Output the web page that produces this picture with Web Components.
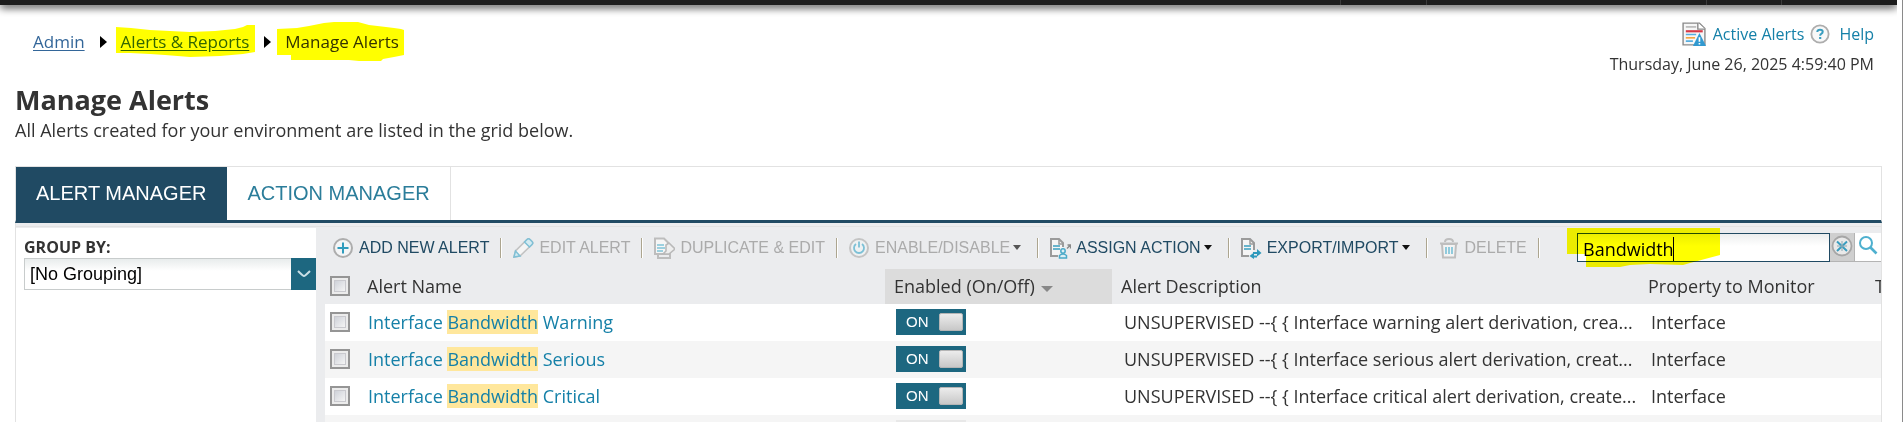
<!DOCTYPE html>
<html lang="en">
<head>
<meta charset="utf-8">
<title>Manage Alerts</title>
<style>
    :root {
        --navy: #204a63;
        --teal: #1d6780;
        --link: #1580a8;
        --text: #333;
        --panel-grey: #ebecee;
        --line: #e2e2e2;
        --ui-font: "Open Sans", "Noto Sans", sans-serif;
        --button-font: "Liberation Sans", Arial, sans-serif;
    }

    body {
        margin: 0;
        height: 100vh;
        overflow: hidden;
        background: #fff;
        color: var(--text);
        font: 18px/24px var(--ui-font);
    }
</style>
</head>
<body>
<alerts-page></alerts-page>

<script>
const define = (tagName, html, setup) => {
    const template = document.createElement('template');
    template.innerHTML = html;

    customElements.define(tagName, class extends HTMLElement {
        connectedCallback() {
            if (!this.shadowRoot) {
                const content = template.content.cloneNode(true);
                if (setup) {
                    setup(this, content);
                }
                this.attachShadow({mode: 'open'});
                this.shadowRoot.appendChild(content);
            }
        }
    });
};

const icons = {
    add: `<circle cx="11" cy="11" r="9" fill="#f4f5f6" stroke="#adadad" stroke-width="2"/>
        <path d="M11 5.500v11M5.500 11h11" stroke="#2f9cbd" stroke-width="2"/>`,
    edit: `<path d="M2 20l1.500-6L15 2.500q1.500-1.500 3 0l2 2q1.500 1.500 0 3L8 19z" fill="#f5f5f5" stroke="#c2c2c2" stroke-width="1.600"/>
        <path d="M15 2.500q1.500-1.500 3 0l2 2q1.500 1.500 0 3L17.500 10l-5-5zM2 20l1.500-6 4.500 5z" fill="#d4ebf2" stroke="#7fc0d6" stroke-width="1.500"/>`,
    duplicate: `<path d="M5 17v4h12v-5" fill="none" stroke="#bdbdbd" stroke-width="2"/>
        <path d="M2 1.500h9l4 4V17H2z" fill="#f6f6f6" stroke="#bdbdbd" stroke-width="2"/>
        <path d="M4 8h7M4 11h8M4 14h6" stroke="#7fc3d8" stroke-width="1.600"/>
        <path d="M10 17l3-3V8l3-2 6 6-6 5z" fill="#eee" stroke="#b9b9b9" stroke-width="1.600"/>`,
    power: `<circle cx="11" cy="11" r="9" fill="#eef1f2" stroke="#c4c4c4" stroke-width="2"/>
        <path d="M8 7a5 5 0 1 0 6 0M11 4.500v6" fill="none" stroke="#7cc0d6" stroke-width="1.800"/>`,
    assign: `<path d="M9 19H2V2h8l4 4v4" fill="#f5f5f5" stroke="#9b9b9b" stroke-width="2"/>
        <path d="M10 2v5h4" fill="none" stroke="#9b9b9b" stroke-width="1.500"/>
        <path d="M4 9h7M4 12h7" stroke="#3a9fbe" stroke-width="1.700"/>
        <circle cx="14" cy="14" r="2.200" fill="#dceff5" stroke="#4aa9c8" stroke-width="1.500"/>
        <path d="M10.500 21v-2.500q3.500-3 7 0V21z" fill="#dceff5" stroke="#4aa9c8" stroke-width="1.500"/>
        <path d="M18 11.500l3-3M18.500 8h3v3.500" fill="none" stroke="#888" stroke-width="1.400"/>`,
    transfer: `<path d="M9 19H2V2h8l4 4v7" fill="#f5f5f5" stroke="#9b9b9b" stroke-width="2"/>
        <path d="M10 2v5h4" fill="none" stroke="#9b9b9b" stroke-width="1.500"/>
        <path d="M4 9h7M4 12h7" stroke="#3a9fbe" stroke-width="1.700"/>
        <path d="M13 15h4v-3l4.500 4-4.500 3.500V17h-4z" fill="#2e99bc"/>
        <path d="M17 20.500h-3V22l-4.500-3 4.500-3.500v3h3z" fill="#2e99bc"/>`,
    trash: `<path d="M4 7h14l-1 13.500H5z" fill="#f3f3f3" stroke="#bebebe" stroke-width="2"/>
        <path d="M2 6.500h18M7 5q0-3 4-3t4 3" fill="none" stroke="#bebebe" stroke-width="2"/>
        <path d="M8 10v7M11 10v7M14 10v7" stroke="#7fc3d8" stroke-width="1.700"/>`,
    alerts: `<path d="M1 1h15l5 5v15H1z" fill="#f7f7f7" stroke="#8b8b8b" stroke-width="1.300"/>
        <path d="M14.500 1v5.500H21" fill="#fff" stroke="#8b8b8b" stroke-width="1.300"/>
        <path d="M3.500 4.500H13" stroke="#b8b8b8" stroke-width="1.500"/>
        <path d="M3.500 8.500H19" stroke="#d63845" stroke-width="2"/>
        <path d="M3.500 11.500H13M3.500 17.500H10" stroke="#57aee0" stroke-width="1.500"/>
        <path d="M3.500 14.500H12" stroke="#f4a640" stroke-width="1.500"/>
        <path d="M16 10l6 12H10z" fill="#3199d0"/>
        <path d="M16 14v4M16 19.300v1.400" stroke="#fff" stroke-width="1.500"/>`,
    help: `<circle cx="11" cy="11" r="9.500" fill="#f8f8f8" stroke="#adadad" stroke-width="2"/>
        <path d="M8 8.800q.2-2.600 3-2.600 3 0 3 2.400 0 1.400-1.600 2.200-1.200.6-1.200 2" fill="none" stroke="#3a9dbf" stroke-width="2.200"/>
        <path d="M11.200 14.300v2.200" stroke="#3a9dbf" stroke-width="2.400"/>`,
    clear: `<circle cx="11" cy="11" r="9.500" fill="#e9e9e9" stroke="#a6a6a6" stroke-width="1.800"/>
        <path d="M6 6.500l10 9.500M16 6.500L6 16" stroke="#3a9dbf" stroke-width="2"/>
        <path d="M11 6v10M6 11h10" stroke="#8fa9b2" stroke-width="1"/>`,
    search: `<circle cx="9" cy="8" r="6" fill="#fff" stroke="#4eb0cf" stroke-width="2"/>
        <path d="M13.500 12.500l6 6" stroke="#4eb0cf" stroke-width="2.600"/>`
};

define('app-icon', `
    <style>
        :host {
            display: block;
            flex: none;
            width: var(--icon-size, 22px);
            height: var(--icon-size, 22px);
        }

        svg {
            display: block;
            width: 100%;
            height: 100%;
        }
    </style>
    <svg viewBox="0 0 22 22" aria-hidden="true"></svg>
`, (host, content) => {
    content.querySelector('svg').innerHTML = icons[host.getAttribute('name')];
});

// Highlighter stroke laid over whatever is slotted in
define('marker-pen', `
    <style>
        :host {
            display: block;
            position: relative;
        }

        svg {
            position: absolute;
            top: 0;
            left: 0;
            overflow: visible;
            mix-blend-mode: multiply;
            pointer-events: none;
        }
    </style>
    <slot></slot>
    <svg width="1" height="1" aria-hidden="true"><path fill="#ff0"/></svg>
`, (host, content) => {
    content.querySelector('path').setAttribute('d', host.getAttribute('stroke'));
});

define('top-bar', `
    <style>
        :host {
            display: block;
            flex: none;
            height: 18px;
            margin-right: 5px;
            overflow: hidden;
        }

        nav {
            display: flex;
            justify-content: flex-end;
            height: 5px;
            background: #1c1c1c;
            box-shadow: 0 2px 8px #000;
        }

        span {
            box-sizing: border-box;
            width: 75px;
            border-left: 1px solid #3a3a3a;
        }

        .menu {
            width: 86px;
        }

        .search {
            width: 280px;
        }

        .user {
            width: 116px;
        }
    </style>
    <nav><span class="menu"></span><span class="search"></span><span></span><span class="user"></span></nav>
`);

define('crumb-trail', `
    <style>
        :host {
            display: block;
            font-size: 17px;
        }

        nav {
            display: flex;
            align-items: center;
            gap: 14px;
        }

        a {
            color: #336699;
            text-underline-offset: 2px;
        }

        svg {
            display: block;
        }
    </style>
    <nav aria-label="Breadcrumb">
        <a href="#admin">Admin</a>
        <svg width="8" height="12"><path d="M1 0l7 6-7 6z"/></svg>
        <marker-pen stroke="M-5-3L10-2 29 0 69 2 94 1 114-1 122-3 126-5H134V22L122 24 99 26 69 27 44 25 29 24 9 23H-5z"><a href="#reports">Alerts &amp; Reports</a></marker-pen>
        <svg width="8" height="12"><path d="M1 0l7 6-7 6z"/></svg>
        <marker-pen stroke="M-8-1L12-2 24-4 39-7 49-8H73L84-5 101-3 109-2 116-1 119 0V25L109 27 98 29 96 31H74L64 30H6V25H-8z"><span aria-current="page">Manage Alerts</span></marker-pen>
    </nav>
`);

define('page-tools', `
    <style>
        :host {
            display: flex;
            flex-direction: column;
            align-items: flex-end;
            gap: 6px;
            font-size: 16px;
        }

        div {
            display: flex;
            gap: 6px;
        }

        a {
            display: flex;
            align-items: center;
            gap: 7px;
            color: var(--link);
            text-decoration: none;
        }

        a:first-child {
            --icon-size: 24px;
        }

        a:last-child {
            --icon-size: 20px;
            gap: 9px;
        }
    </style>
    <div>
        <a href="#active"><app-icon name="alerts"></app-icon>Active Alerts</a>
        <a href="#help"><app-icon name="help"></app-icon>Help</a>
    </div>
    <time datetime="2025-06-26T16:59:40">Thursday, June 26, 2025 4:59:40 PM</time>
`);

define('tab-strip', `
    <style>
        :host {
            display: flex;
            flex: none;
            border: 1px solid var(--line);
            border-bottom: 3px solid var(--navy);
        }

        button {
            height: 53px;
            padding: 0 20px 2px;
            border: 0;
            border-right: 1px solid var(--line);
            background: #fff;
            color: #2b7d9a;
            font: 20px/24px var(--button-font);
        }

        [aria-selected="true"] {
            border-color: var(--navy);
            background: var(--navy);
            color: #fff;
        }
    </style>
    <button role="tab" aria-selected="true">ALERT MANAGER</button>
    <button role="tab" aria-selected="false">ACTION MANAGER</button>
`);

define('group-panel', `
    <style>
        :host {
            display: block;
            flex: none;
            box-sizing: border-box;
            width: 300px;
            padding: 7px 0 0 8px;
            background: #fff;
        }

        label {
            display: block;
            height: 23px;
            font-size: 16px;
            font-weight: bold;
        }

        .select {
            display: grid;
            grid-template-columns: 1fr 25px;
            height: 32px;
        }

        select {
            grid-area: 1 / 1 / 2 / 3;
            appearance: none;
            padding: 0 5px;
            border: 1px solid #c8cccc;
            border-radius: 0;
            background: linear-gradient(#e8ecec, #fff 12px);
            color: #000;
            font: 18px var(--button-font);
        }

        svg {
            grid-area: 1 / 2;
            background: var(--teal);
            pointer-events: none;
        }
    </style>
    <label for="grouping">GROUP BY:</label>
    <div class="select">
        <select id="grouping"><option>[No Grouping]</option></select>
        <svg width="25" height="32" fill="none" stroke="#c9dfe6" stroke-width="2"><path d="M7 13q5 5 6 5t6-5"/></svg>
    </div>
`);

define('tool-button', `
    <style>
        :host {
            display: flex;
            align-items: center;
            flex: none;
        }

        button {
            display: flex;
            align-items: center;
            padding: 0;
            border: 0;
            background: none;
            color: var(--navy);
            font: 16px/20px var(--button-font);
            white-space: nowrap;
        }

        app-icon {
            margin-right: 5px;
        }

        :host([disabled]) button {
            color: #ababab;
        }

        :host([menu]) button::after {
            content: "";
            margin: 0 5px 0 3px;
            border: 4px solid transparent;
            border-top: 5px solid #111;
            border-bottom: 0;
        }

        :host([menu][disabled]) button::after {
            border-top-color: #555;
        }

        :host::after {
            content: "";
            width: 1px;
            height: 20px;
            margin: 0 10px 0 11px;
            border-right: 1px solid #fff;
            background: #aca58f;
        }
    </style>
    <button type="button"><app-icon></app-icon><slot></slot></button>
`, (host, content) => {
    content.querySelector('app-icon').setAttribute('name', host.getAttribute('icon'));
    content.querySelector('button').disabled = host.hasAttribute('disabled');
});

define('search-box', `
    <style>
        :host {
            display: block;
            margin-left: auto;
        }

        form {
            display: flex;
            height: 29px;
            margin: 0;
        }

        input {
            box-sizing: border-box;
            width: 253px;
            height: 29px;
            padding: 2px 5px 0;
            border: 1px solid var(--navy);
            border-radius: 0;
            outline: 0;
            background: linear-gradient(#eceeee, #fff 12px);
            color: #000;
            font: 18px/24px var(--ui-font);
        }

        .caret {
            position: absolute;
            top: 4px;
            left: 96px;
            width: 1px;
            height: 24px;
            background: #000;
        }

        button {
            display: flex;
            align-items: center;
            justify-content: center;
            box-sizing: border-box;
            width: 25px;
            padding: 0 0 2px;
            border: solid #b4b4b4;
            border-width: 0 1px 1px 0;
            background: #cfcfcf;
        }

        button[type="submit"] {
            width: 26px;
            border-right: 0;
            background: #fff;
        }
    </style>
    <form onsubmit="return false">
        <marker-pen stroke="M-10-5H143V22L128 26 113 30 106 32 73 31 53 32 43 34H9V21H-10z">
            <input type="text" aria-label="Search alerts" value="Bandwidth"><span class="caret"></span>
        </marker-pen>
        <button type="button" aria-label="Clear search"><app-icon name="clear"></app-icon></button>
        <button type="submit" aria-label="Search"><app-icon name="search"></app-icon></button>
    </form>
`);

define('alert-toolbar', `
    <style>
        :host {
            display: flex;
            align-items: center;
            box-sizing: border-box;
            height: 41px;
            padding: 0 0 2px 16px;
        }
    </style>
    <tool-button icon="add">ADD NEW ALERT</tool-button>
    <tool-button icon="edit" disabled>EDIT ALERT</tool-button>
    <tool-button icon="duplicate" disabled>DUPLICATE &amp; EDIT</tool-button>
    <tool-button icon="power" disabled menu>ENABLE/DISABLE</tool-button>
    <tool-button icon="assign" menu>ASSIGN ACTION</tool-button>
    <tool-button icon="transfer" menu>EXPORT/IMPORT</tool-button>
    <tool-button icon="trash" disabled>DELETE</tool-button>
    <search-box></search-box>
`);

define('toggle-switch', `
    <style>
        :host {
            display: block;
        }

        button {
            display: flex;
            align-items: center;
            justify-content: space-between;
            width: 70px;
            height: 26px;
            padding: 0 3px 0 10px;
            border: 0;
            background: var(--teal);
            color: #fff;
            font: 15px/26px var(--button-font);
        }

        i {
            box-sizing: border-box;
            width: 24px;
            height: 18px;
            border: 1px solid #b5b5b5;
            border-radius: 2px;
            background: linear-gradient(#ececec, #c8c8c8);
        }

        [aria-checked="false"] {
            background: #e8e8e8;
        }
    </style>
    <button type="button" role="switch" aria-label="Enabled"><slot></slot><i></i></button>
`, (host, content) => {
    content.querySelector('button').setAttribute('aria-checked', !host.hasAttribute('off'));
});

const alerts = [
    {name: 'Warning', description: 'UNSUPERVISED --{ { Interface warning alert derivation, crea...'},
    {name: 'Serious', description: 'UNSUPERVISED --{ { Interface serious alert derivation, creat...'},
    {name: 'Critical', description: 'UNSUPERVISED --{ { Interface critical alert derivation, create...'}
];

define('alert-grid', `
    <style>
        :host {
            display: block;
            padding-left: 9px;
        }

        table {
            width: 100%;
            border-collapse: collapse;
            table-layout: fixed;
        }

        th, td {
            box-sizing: border-box;
            padding: 0 0 2px 12px;
            overflow: hidden;
            text-align: left;
            font-weight: normal;
            white-space: nowrap;
        }

        th {
            height: 35px;
            padding-left: 9px;
        }

        td {
            height: 37px;
        }

        th:first-child, td:first-child {
            padding-left: 5px;
        }

        td:nth-child(2) {
            padding-left: 10px;
        }

        td:nth-child(3) {
            padding-left: 11px;
        }

        tbody tr {
            background: #fff;
        }

        tbody tr:nth-child(even) {
            background: #f5f5f5;
        }

        .sorted {
            background: #dcdcdc;
        }

        .sorted::after {
            content: "";
            display: inline-block;
            margin-left: 6px;
            border: 6px solid transparent;
            border-top-color: #888;
            border-bottom: 0;
            vertical-align: 1px;
        }

        input {
            appearance: none;
            display: block;
            box-sizing: border-box;
            width: 20px;
            height: 20px;
            margin: 0;
            border: 2px solid #959595;
            background: linear-gradient(135deg, #c3c7d0, #f4f4f4 80%);
            box-shadow: inset 0 0 0 2px #ececec, inset 0 0 0 3px #c9c9ce;
        }

        a {
            color: var(--link);
            text-decoration: none;
        }

        mark {
            display: inline-block;
            background: #ffe79c;
            color: inherit;
            line-height: 24px;
        }

        .below mark {
            width: 91px;
            height: 24px;
            margin-left: 205px;
            vertical-align: middle;
        }
    </style>
    <table>
        <colgroup>
            <col style="width: 33px"><col><col style="width: 227px">
            <col style="width: 527px"><col style="width: 227px"><col style="width: 15px">
        </colgroup>
        <thead>
            <tr>
                <th><input type="checkbox" aria-label="Select all"></th>
                <th>Alert Name</th>
                <th class="sorted" aria-sort="descending">Enabled (On/Off)</th>
                <th>Alert Description</th>
                <th>Property to Monitor</th>
                <th>T</th>
            </tr>
        </thead>
        <tbody></tbody>
    </table>
`, (host, content) => {
    const rows = alerts.map(({name, description}) => `
        <tr>
            <td><input type="checkbox" aria-label="Select ${name}"></td>
            <td><a href="#alert">Interface <mark>Bandwidth</mark> ${name}</a></td>
            <td><toggle-switch>ON</toggle-switch></td>
            <td>${description}</td>
            <td>Interface</td>
            <td></td>
        </tr>`);

    // Row that is only just starting to scroll into view
    rows.push(`
        <tr class="below">
            <td></td><td><mark></mark></td><td><toggle-switch off></toggle-switch></td>
            <td></td><td></td><td></td>
        </tr>`);
    content.querySelector('tbody').innerHTML = rows.join('');
});

define('alerts-page', `
    <style>
        :host {
            display: flex;
            flex-direction: column;
            box-sizing: border-box;
            height: 100vh;
            overflow: hidden;
            border-right: 1px solid #8a8a8a;
        }

        header {
            display: flex;
            flex: none;
            box-sizing: border-box;
            justify-content: space-between;
            height: 64px;
            padding: 4px 28px 0 33px;
        }

        crumb-trail {
            padding-top: 8px;
        }

        .intro {
            flex: none;
            padding: 0 15px 24px;
        }

        h1 {
            margin: 0;
            font-size: 27px;
            line-height: 36px;
        }

        p {
            margin: 0;
        }

        tab-strip, .manager {
            margin: 0 20px 0 15px;
        }

        .manager {
            display: flex;
            flex: none;
            padding-top: 5px;
            border: solid var(--line);
            border-width: 0 1px;
            background: linear-gradient(var(--line), var(--line)) 0 3px / 100% 1px no-repeat var(--panel-grey);
        }

        .grid {
            flex: 1;
            min-width: 0;
        }
    </style>
    <top-bar></top-bar>
    <header>
        <crumb-trail></crumb-trail>
        <page-tools></page-tools>
    </header>
    <div class="intro">
        <h1>Manage Alerts</h1>
        <p>All Alerts created for your environment are listed in the grid below.</p>
    </div>
    <tab-strip role="tablist"></tab-strip>
    <div class="manager">
        <group-panel></group-panel>
        <div class="grid">
            <alert-toolbar></alert-toolbar>
            <alert-grid></alert-grid>
        </div>
    </div>
`);
</script>
</body>
</html>
